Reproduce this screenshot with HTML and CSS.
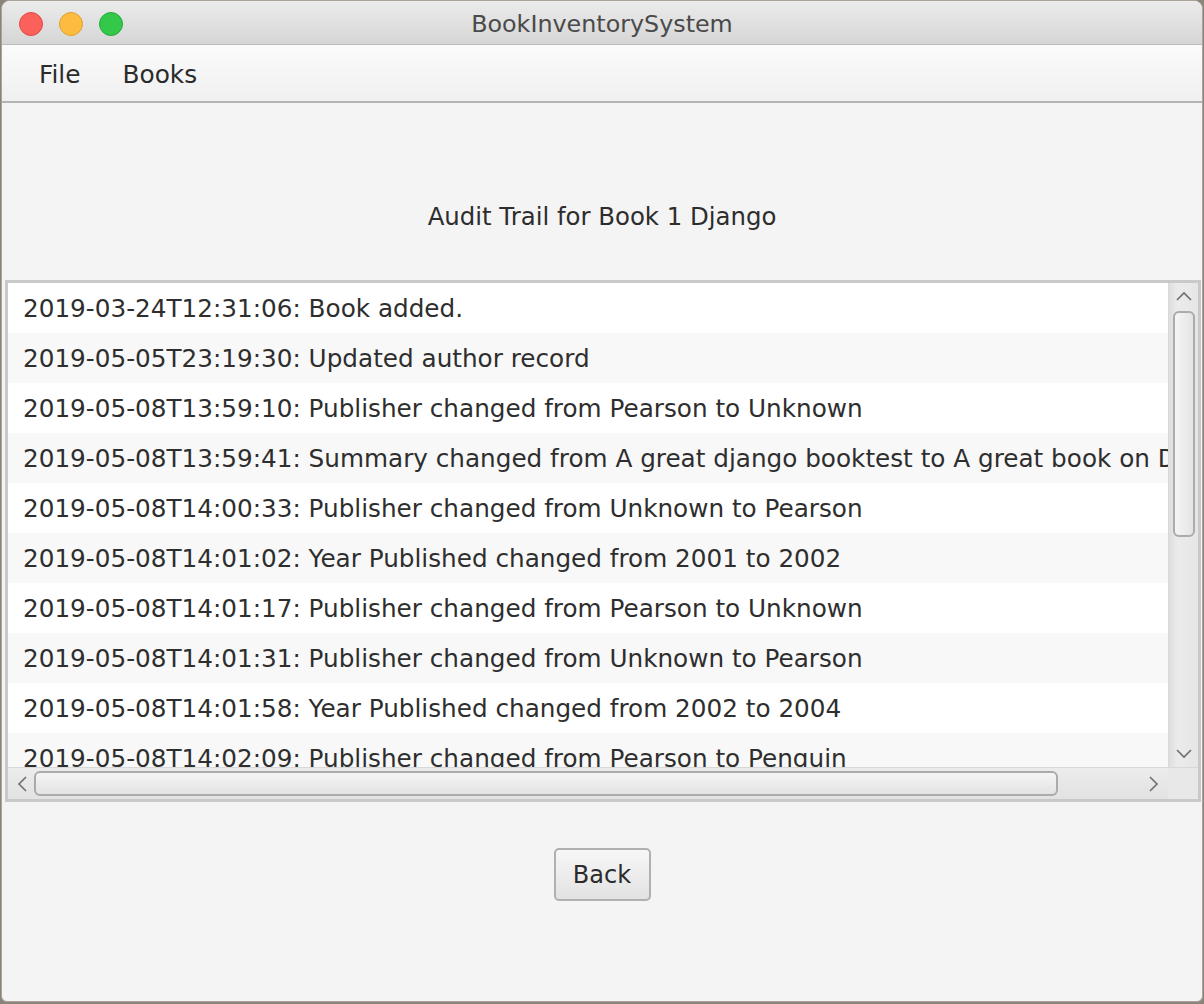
FILE: index.html
```html
<!DOCTYPE html>
<html>
<head>
<meta charset="utf-8">
<link rel="stylesheet" href="styles.css">
</head>
<body>
<div class="window">
  <div class="titlebar">
    <div class="lights">
      <span class="light red"></span>
      <span class="light yellow"></span>
      <span class="light green"></span>
    </div>
    <div class="wtitle">BookInventorySystem</div>
  </div>
  <div class="menubar">
    <span class="menu">File</span>
    <span class="menu">Books</span>
  </div>
  <div class="content">
    <div class="heading">Audit Trail for Book 1 Django</div>
    <div class="listbox">
      <div class="listmain">
        <div class="rows">
          <div class="row">2019-03-24T12:31:06: Book added.</div>
          <div class="row alt">2019-05-05T23:19:30: Updated author record</div>
          <div class="row">2019-05-08T13:59:10: Publisher changed from Pearson to Unknown</div>
          <div class="row alt">2019-05-08T13:59:41: Summary changed from A great django booktest to A great book on Django</div>
          <div class="row">2019-05-08T14:00:33: Publisher changed from Unknown to Pearson</div>
          <div class="row alt">2019-05-08T14:01:02: Year Published changed from 2001 to 2002</div>
          <div class="row">2019-05-08T14:01:17: Publisher changed from Pearson to Unknown</div>
          <div class="row alt">2019-05-08T14:01:31: Publisher changed from Unknown to Pearson</div>
          <div class="row">2019-05-08T14:01:58: Year Published changed from 2002 to 2004</div>
          <div class="row alt">2019-05-08T14:02:09: Publisher changed from Pearson to Penguin</div>
        </div>
        <div class="vscroll">
          <svg class="arrow" width="18" height="12" viewBox="0 0 18 12"><path d="M2 10 L9 3 L16 10" fill="none" stroke="#6e6e6e" stroke-width="1.6"/></svg>
          <div class="vthumbwrap"><div class="vthumb"></div></div>
          <svg class="arrow" width="18" height="12" viewBox="0 0 18 12"><path d="M2 2 L9 9 L16 2" fill="none" stroke="#6e6e6e" stroke-width="1.6"/></svg>
        </div>
      </div>
      <div class="hbar">
        <div class="hscroll">
          <svg class="harrow" width="12" height="18" viewBox="0 0 12 18"><path d="M10 2 L3 9 L10 16" fill="none" stroke="#6e6e6e" stroke-width="1.6"/></svg>
          <div class="hthumbwrap"><div class="hthumb"></div></div>
          <svg class="harrow" width="12" height="18" viewBox="0 0 12 18"><path d="M2 2 L9 9 L2 16" fill="none" stroke="#6e6e6e" stroke-width="1.6"/></svg>
        </div>
        <div class="corner"></div>
      </div>
    </div>
    <div class="footer">
      <button class="btn">Back</button>
    </div>
  </div>
</div>
</body>
</html>
```
FILE: styles.css
```css
html, body {
  margin: 0;
  padding: 0;
}
body {
  width: 1204px;
  height: 1004px;
  background: #8b847b;
  font-family: "DejaVu Sans", "Liberation Sans", sans-serif;
  overflow: hidden;
}
.window {
  width: 1200px;
  height: 1000px;
  margin-left: 1px;
  border: 1px solid #a9a39c;
  border-radius: 9px 9px 6px 6px;
  overflow: hidden;
  background: #f4f4f4;
  display: flex;
  flex-direction: column;
}
.titlebar {
  height: 43px;
  border-bottom: 1px solid #bcbcbc;
  background: linear-gradient(#ebebeb, #d6d6d6);
  display: flex;
  align-items: center;
  position: relative;
}
.lights {
  display: flex;
  gap: 16px;
  padding-left: 17px;
  padding-top: 2px;
}
.light {
  width: 22px;
  height: 22px;
  border-radius: 50%;
  display: block;
}
.red { background: #fc605b; border: 1px solid #de4b45; }
.yellow { background: #fdbc40; border: 1px solid #dea233; }
.green { background: #34c84a; border: 1px solid #27aa36; }
.wtitle {
  position: absolute;
  left: 0;
  right: 0;
  top: 9px;
  text-align: center;
  font-size: 23.8px;
  color: #4a4a4a;
}
.menubar {
  border-bottom: 2px solid #b4b4b4;
  background: linear-gradient(#fbfbfb, #f0f0f0);
  display: flex;
  align-items: center;
  padding-left: 37px;
  gap: 42px;
  padding-top: 3px;
  box-sizing: border-box;
  height: 58px;
}
.menu {
  font-size: 24.8px;
  color: #2b2b2b;
}
.content {
  flex: 1;
  display: flex;
  flex-direction: column;
}
.heading {
  height: 30px;
  line-height: 30px;
  padding-top: 99px;
  padding-bottom: 48px;
  text-align: center;
  font-size: 24.4px;
  color: #2d2d2d;
}
.listbox {
  margin-left: 3px;
  margin-right: 1px;
  border: 3px solid #c9c9c9;
  background: #fff;
  display: flex;
  flex-direction: column;
}
.listmain {
  display: flex;
  height: 484px;
}
.rows {
  flex: 1;
  overflow: hidden;
}
.row {
  height: 50px;
  line-height: 51px;
  padding-left: 15px;
  font-size: 24.7px;
  color: #2e2e2e;
  white-space: nowrap;
  background: #fff;
}
.row.alt {
  background: #f8f8f8;
}
.vscroll {
  width: 30px;
  background: linear-gradient(90deg, #dedede, #ebebeb 30%, #e6e6e6);
  border-left: 1px solid #d8d8d8;
  box-sizing: border-box;
  display: flex;
  flex-direction: column;
  align-items: center;
}
.arrow {
  flex: none;
  margin: 7px 0;
}
.vthumbwrap {
  flex: 1;
  width: 100%;
  display: flex;
  justify-content: center;
}
.vthumb {
  width: 22px;
  height: 226px;
  margin-top: 2px;
  border: 2px solid #ababab;
  border-radius: 6px;
  box-sizing: border-box;
  background: linear-gradient(90deg, #f5f5f5, #e4e4e4);
}
.hbar {
  display: flex;
  height: 32px;
}
.hscroll {
  flex: 1;
  background: linear-gradient(#ececec, #e2e2e2);
  border-top: 1px solid #d8d8d8;
  display: flex;
  align-items: center;
}
.harrow {
  flex: none;
  margin: 0 8px;
}
.hthumbwrap {
  flex: 1;
  height: 100%;
  display: flex;
  align-items: center;
}
.hthumb {
  width: 1024px;
  height: 25px;
  margin-left: -2px;
  border: 2px solid #ababab;
  border-radius: 6px;
  box-sizing: border-box;
  background: linear-gradient(#f5f5f5, #e3e3e3);
}
.corner {
  width: 30px;
  background: #e8e8e8;
  border-top: 1px solid #d8d8d8;
}
.footer {
  display: flex;
  justify-content: center;
  padding-top: 46px;
}
.btn {
  width: 97px;
  height: 53px;
  border: 2px solid #b0b0b0;
  border-radius: 5px;
  background: linear-gradient(#f7f7f7, #e2e2e2);
  font-family: "DejaVu Sans", "Liberation Sans", sans-serif;
  font-size: 24px;
  color: #2b2b2b;
  padding: 0;
}
```
